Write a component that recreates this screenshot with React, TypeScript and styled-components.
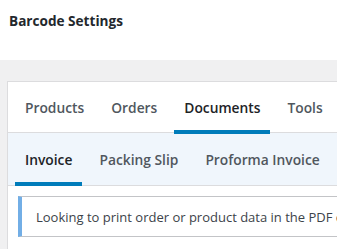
import React from "react";
import styled, { createGlobalStyle } from "styled-components";

const GlobalStyle = createGlobalStyle`
  html, body {
    margin: 0;
    padding: 0;
    background: #f0f0f1;
    overflow: hidden;
  }
  body {
    font-family: "Open Sans", "Noto Sans", sans-serif;
    color: #1d2327;
  }
`;

const Header = styled.div`
  height: 60px;
  background: #fff;
  padding: 0 9px;
  box-sizing: border-box;
`;

const Title = styled.h1`
  margin: 0;
  padding-top: 12px;
  font-size: 13.6px;
  line-height: 18px;
  font-weight: 700;
  color: #23282d;
`;

const Body = styled.div`
  padding: 21px 0 0 7px;
`;

const Panel = styled.div`
  width: 340px;
  background: #fff;
  border: 1px solid #dcdcde;
  border-right: none;
  height: 170px;
  overflow: hidden;
`;

const TabBar = styled.div<{ $sub?: boolean }>`
  display: flex;
  gap: 7px;
  height: ${(p) => (p.$sub ? 52 : 50)}px;
  padding-left: 7px;
  background: ${(p) => (p.$sub ? "#f0f6fc" : "#fff")};
  border-bottom: 1px solid #dcdcde;
`;

const Tab = styled.div<{ $active?: boolean; $sub?: boolean }>`
  position: relative;
  display: flex;
  align-items: center;
  padding: 0 10px;
  font-size: 13.8px;
  font-weight: 600;
  color: ${(p) => (p.$active ? "#1d2327" : "#50575e")};
  white-space: nowrap;

  &::after {
    content: "";
    display: ${(p) => (p.$active ? "block" : "none")};
    position: absolute;
    left: 0;
    right: 0;
    bottom: ${(p) => (p.$sub ? -1 : -2)}px;
    height: 4px;
    background: #007cba;
  }
`;

const Content = styled.div`
  padding: 10px 0 10px 10px;
`;

const Notice = styled.div`
  height: 41px;
  box-sizing: border-box;
  display: flex;
  align-items: center;
  padding-left: 14px;
  border: 1px solid #c3c4c7;
  border-left: 4px solid #72aee6;
  border-right: none;
  font-size: 13px;
  color: #3c434a;
  white-space: nowrap;
  overflow: hidden;
`;

const mainTabs = ["Products", "Orders", "Documents", "Tools"];
const subTabs = ["Invoice", "Packing Slip", "Proforma Invoice"];

export default function App() {
  return (
    <>
      <GlobalStyle />
      <Header>
        <Title>Barcode Settings</Title>
      </Header>
      <Body>
        <Panel>
          <TabBar>
            {mainTabs.map((t) => (
              <Tab key={t} $active={t === "Documents"}>
                {t}
              </Tab>
            ))}
          </TabBar>
          <TabBar $sub>
            {subTabs.map((t) => (
              <Tab key={t} $sub $active={t === "Invoice"}>
                {t}
              </Tab>
            ))}
          </TabBar>
          <Content>
            <Notice>Looking to print order or product data in the PDF d</Notice>
          </Content>
        </Panel>
      </Body>
    </>
  );
}
